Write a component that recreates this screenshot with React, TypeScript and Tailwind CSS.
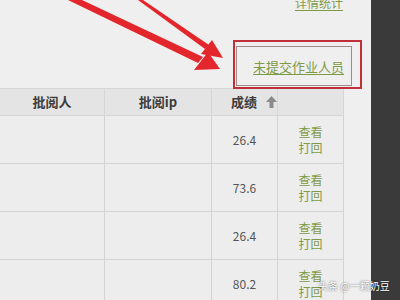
const font = "font-['Microsoft_YaHei','Noto_Sans_CJK_SC',sans-serif]"

const rows = ["26.4", "73.6", "26.4", "80.2"]

function SortArrow() {
  return (
    <svg width="11" height="12" viewBox="0 0 11 12" className="ml-[9px] shrink-0">
      <path d="M5.5 0 L11 6 L7.5 6 L7.5 12 L3.5 12 L3.5 6 L0 6 Z" fill="#8a8a8a" />
    </svg>
  )
}

function Arrows() {
  return (
    <svg width="371" height="300" className="absolute left-0 top-0 pointer-events-none">
      {/* thick lower arrow */}
      <polygon points="68,0 82,0 203,57 198,63" fill="#e3262b" />
      <polygon points="220,69 194,70 208,52" fill="#e3262b" />
      {/* thin upper arrow */}
      <polygon points="138,0 143,0 209,45 205,49" fill="#e3262b" />
      <polygon points="223,58 201,54 212,40" fill="#e3262b" />
    </svg>
  )
}

export default function App() {
  return (
    <div className={`relative w-[400px] h-[300px] flex overflow-hidden ${font}`}>
      <div className="relative w-[371px] h-[300px] bg-[#efefef] overflow-hidden">
        <div className="h-[88px] flex flex-col items-end pr-[28px]">
          <a className="-mt-[5px] text-[12px] leading-[16px] text-[#7f9a45] underline underline-offset-2">
            详情统计
          </a>
          <a className="mt-[47px] mr-[-1px] text-[13px] leading-[18px] text-[#7f9a45] underline underline-offset-2">
            未提交作业人员
          </a>
        </div>

        <div className="w-[345px] grid grid-cols-[105px_107px_66px_66px] border-t border-[#d6d6d6]">
          <div className="h-[27px] bg-[#e4e4e4] border-r border-b border-[#d6d6d6] flex items-center justify-center text-[13px] font-bold text-[#3c3c3c]">
            批阅人
          </div>
          <div className="h-[27px] bg-[#e4e4e4] border-r border-b border-[#d6d6d6] flex items-center justify-center text-[13px] font-bold text-[#3c3c3c]">
            批阅ip
          </div>
          <div className="h-[27px] bg-[#e4e4e4] border-r border-b border-[#d6d6d6] flex flex-nowrap items-center pl-[19px] text-[13px] font-bold text-[#3c3c3c] whitespace-nowrap overflow-visible">
            <span>成绩</span>
            <SortArrow />
          </div>
          <div className="h-[27px] bg-[#e4e4e4] border-r border-b border-[#d6d6d6]" />

          {rows.map((score, i) => (
            <div key={i} className="contents">
              <div className="h-[48px] bg-[#ededed] border-r border-b border-[#d3d3d3]" />
              <div className="h-[48px] bg-[#ededed] border-r border-b border-[#d3d3d3]" />
              <div className="h-[48px] bg-[#ededed] border-r border-b border-[#d3d3d3] flex items-center justify-center text-[12px] text-[#555]">
                {score}
              </div>
              <div className="h-[48px] bg-[#ededed] border-r border-b border-[#d3d3d3] flex flex-col items-center justify-center text-[12px] leading-[16px] text-[#7f9a45]">
                <span>查看</span>
                <span>打回</span>
              </div>
            </div>
          ))}
        </div>

        <Arrows />
        <div className="absolute left-[233px] top-[40px] w-[129px] h-[49px] border-2 border-[#c0303a]" />
        <div className="absolute left-[236px] top-[46px] w-[116px] h-[40px] border border-[#a08a8a]" />
      </div>
      <div className="flex-1 h-[300px] bg-[#3a3a3a]" />

      <div className="absolute left-[318px] top-[279px] text-[10px] leading-[13px] text-white whitespace-nowrap [text-shadow:0_0_2px_rgba(0,0,0,0.7)]">
        头条 @一颗奶豆
      </div>
    </div>
  )
}
